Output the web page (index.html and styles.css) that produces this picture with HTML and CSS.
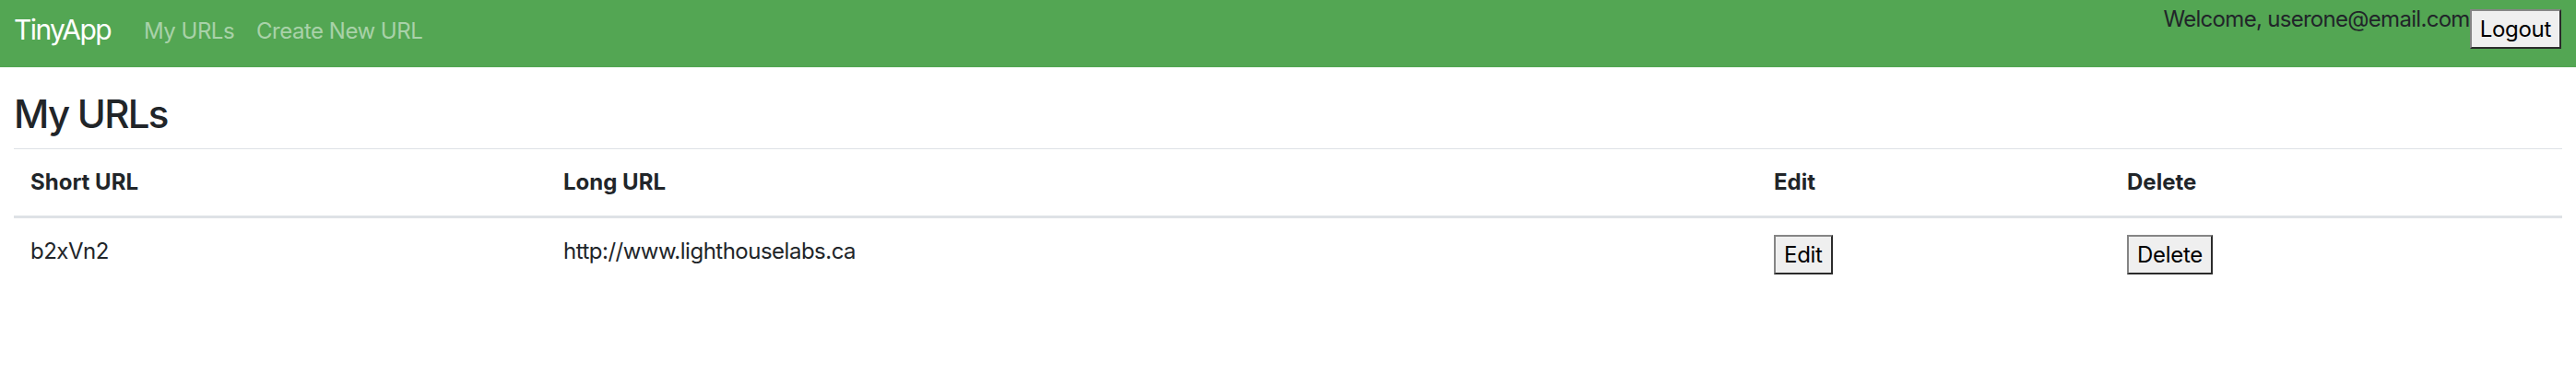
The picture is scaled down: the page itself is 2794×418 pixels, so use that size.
FILE: index.html
```html
<!DOCTYPE html>
<html lang="en">
<head>
<meta charset="utf-8">
<title>TinyApp</title>
<link rel="stylesheet" href="styles.css">
</head>
<body>
<nav class="navbar">
  <a class="brand" href="#">TinyApp</a>
  <ul class="nav-links">
    <li><a class="nav-link" href="#">My URLs</a></li>
    <li><a class="nav-link" href="#">Create New URL</a></li>
  </ul>
  <form class="user-form">
    <span class="welcome">Welcome, userone@email.com</span>
    <button type="button" class="btn btn-logout">Logout</button>
  </form>
</nav>
<main class="container">
  <h3 class="title">My URLs</h3>
  <table class="table">
    <thead>
      <tr>
        <th class="col-short">Short URL</th>
        <th class="col-long">Long URL</th>
        <th class="col-edit">Edit</th>
        <th class="col-delete">Delete</th>
      </tr>
    </thead>
    <tbody>
      <tr>
        <td>b2xVn2</td>
        <td>http://www.lighthouselabs.ca</td>
        <td><form class="cell-form"><button type="button" class="btn">Edit</button></form></td>
        <td><form class="cell-form"><button type="button" class="btn">Delete</button></form></td>
      </tr>
    </tbody>
  </table>
</main>
</body>
</html>
```

FILE: styles.css
```css
* { box-sizing: border-box; }

html, body {
  margin: 0;
  padding: 0;
  background: #ffffff;
}

body {
  font-family: Inter, "Noto Sans", sans-serif;
  font-size: 24px;
  line-height: 36px;
  letter-spacing: -0.5px;
  color: #212529;
}

.navbar {
  display: flex;
  align-items: flex-start;
  height: 73px;
  padding: 0 16px 0 15px;
  background: #53a653;
}

.brand {
  margin-top: 10px;
  margin-right: 24px;
  font-size: 30px;
  line-height: 45px;
  letter-spacing: -1.6px;
  color: #ffffff;
  text-decoration: none;
}

.nav-links {
  display: flex;
  margin: 16px 0 0;
  padding: 0;
  list-style: none;
  flex: 1;
}

.nav-link {
  display: block;
  padding: 0 12px;
  color: rgba(255, 255, 255, 0.5);
  text-decoration: none;
}

.user-form {
  display: flex;
  align-items: flex-start;
  margin: 0;
}

.welcome {
  margin-top: 3px;
  letter-spacing: -0.7px;
  color: #212529;
}

.btn {
  font-family: inherit;
  font-size: 24px;
  line-height: 36px;
  letter-spacing: -0.3px;
  padding: 1.5px 9px;
  margin: 0;
  color: #000000;
  background: #efefef;
  border-width: 2px;
  border-style: solid;
  border-color: #858585 #2b2b2b #2b2b2b #858585;
  border-radius: 0;
}

.btn-logout {
  margin-top: 10px;
}

.container {
  padding: 0 15px;
}

.title {
  margin: 26px 0 12px;
  font-size: 42px;
  font-weight: 500;
  line-height: 1.2;
  letter-spacing: -1.7px;
}

.table {
  width: 100%;
  border-collapse: collapse;
  table-layout: fixed;
}

.table th,
.table td {
  padding: 18px;
  text-align: left;
  vertical-align: top;
  border-top: 1px solid #dee2e6;
}

.table th {
  font-weight: 700;
  letter-spacing: 0;
}

.table thead th {
  border-bottom: 3px solid #dee2e6;
}

.table tbody td {
  border-top: none;
}

.col-short { width: 578px; }
.col-long { width: 1313px; }
.col-edit { width: 383px; }

.cell-form {
  margin: 0;
}

.cell-form .btn {
  display: block;
}
```
